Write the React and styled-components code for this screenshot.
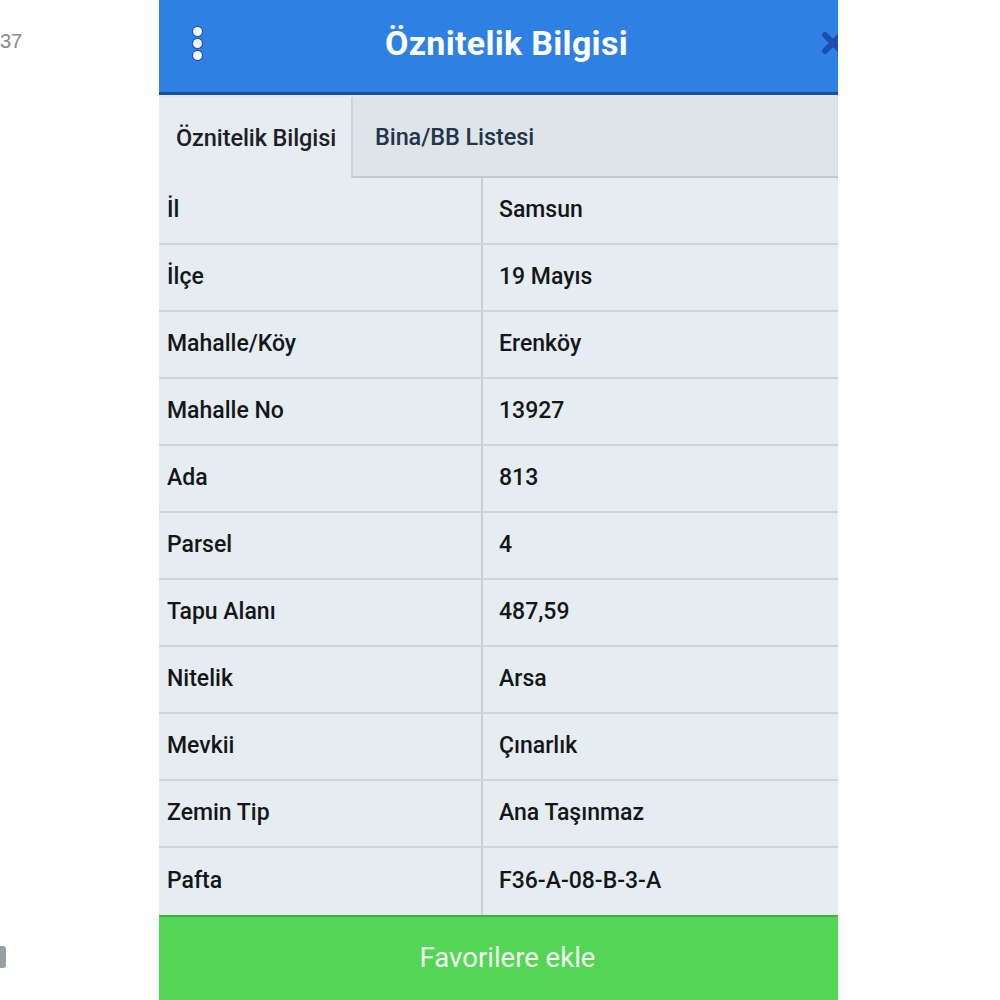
import React from "react";
import styled, { createGlobalStyle } from "styled-components";

const Global = createGlobalStyle`
  html, body { margin: 0; padding: 0; background: #ffffff; }
  body { font-family: Roboto, "Noto Sans", Arial, sans-serif; }
  * { box-sizing: border-box; }
`;

const Page = styled.div`
  width: 1000px;
  height: 1000px;
  display: grid;
  grid-template-columns: 159px 679px 1fr;
  overflow: hidden;
  background: #fff;
`;

const Side = styled.div`
  display: flex;
  flex-direction: column;
  justify-content: space-between;
  padding: 30px 0 32px;
  overflow: hidden;
`;

const SideNum = styled.span`
  font-family: "Liberation Sans", Arial, sans-serif;
  font-size: 20px;
  color: #8a8a8a;
`;

const SideMark = styled.span`
  display: block;
  width: 6px;
  height: 22px;
  background: #9a9fa4;
  border-radius: 0 3px 3px 0;
`;

const Phone = styled.div`
  display: flex;
  flex-direction: column;
  height: 1000px;
  background: #e5edf2;
`;

const Header = styled.header`
  height: 95px;
  flex: none;
  display: grid;
  grid-template-columns: 76px 1fr 60px;
  align-items: center;
  background: #2f80e3;
  border-bottom: 3px solid #1c4f96;
  box-shadow: 0 2px 0 #dfe6ec;
  padding-bottom: 6px;
  overflow: hidden;
`;

const Kebab = styled.div`
  display: flex;
  flex-direction: column;
  align-items: center;
  gap: 3px;
  justify-self: center;
  span {
    width: 9px;
    height: 9px;
    border-radius: 50%;
    background: #f2f6ff;
    box-shadow: 0 0 0 1px #1f4f9c;
  }
`;

const Title = styled.h1`
  margin: 0;
  text-align: center;
  color: #fff;
  font-size: 34px;
  font-weight: 700;
  letter-spacing: 0.3px;
`;

const Close = styled.div`
  justify-self: end;
  margin-right: -8px;
  width: 26px;
  height: 26px;
  display: flex;
  align-items: center;
  justify-content: center;
`;

const Tabs = styled.nav`
  height: 81px;
  flex: none;
  display: flex;
  background: #dfe4e8;
  border-bottom: 2px solid #c3c9ce;
  margin-top: 2px;
`;

const Tab = styled.div`
  display: flex;
  align-items: center;
  padding: ${(p) => (p.$active ? "0 0 0 17px" : "0 22px")};
  width: ${(p) => (p.$active ? "194px" : "auto")};
  font-size: 23.5px;
  font-weight: 500;
  letter-spacing: -0.1px;
  color: ${(p) => (p.$active ? "#1d2024" : "#23354d")};
  background: ${(p) => (p.$active ? "#e5edf1" : "transparent")};
  border-right: ${(p) => (p.$active ? "2px solid #cdd3d8" : "none")};
  margin-bottom: ${(p) => (p.$active ? "-2px" : "0")};
  white-space: nowrap;
`;

const Table = styled.div`
  flex: 1;
  display: flex;
  flex-direction: column;
`;

const Row = styled.div`
  height: 67px;
  flex: none;
  display: grid;
  grid-template-columns: 322px 1fr;
  border-bottom: 2px solid #cdd5da;
  &:last-child {
    border-bottom: none;
  }
`;

const Cell = styled.div`
  display: flex;
  align-items: center;
  padding-left: ${(p) => (p.$value ? "16px" : "8px")};
  padding-bottom: 2px;
  font-size: 23px;
  font-weight: 500;
  color: #141617;
  border-left: ${(p) => (p.$value ? "2px solid #c7cfd4" : "none")};
`;

const Button = styled.button`
  height: 88px;
  flex: none;
  border: none;
  border-top: 2px solid #3fae42;
  background: #53d655;
  color: #f4fbf2;
  font-family: Roboto, "Noto Sans", Arial, sans-serif;
  font-size: 27.5px;
  font-weight: 400;
  padding: 0 0 6px 18px;
  cursor: pointer;
`;

const rows = [
  ["İl", "Samsun"],
  ["İlçe", "19 Mayıs"],
  ["Mahalle/Köy", "Erenköy"],
  ["Mahalle No", "13927"],
  ["Ada", "813"],
  ["Parsel", "4"],
  ["Tapu Alanı", "487,59"],
  ["Nitelik", "Arsa"],
  ["Mevkii", "Çınarlık"],
  ["Zemin Tip", "Ana Taşınmaz"],
  ["Pafta", "F36-A-08-B-3-A"],
];

export default function App() {
  return (
    <>
      <Global />
      <Page>
        <Side>
          <SideNum>37</SideNum>
          <SideMark />
        </Side>
        <Phone>
          <Header>
            <Kebab>
              <span />
              <span />
              <span />
            </Kebab>
            <Title>Öznitelik Bilgisi</Title>
            <Close>
              <svg width="26" height="26" viewBox="0 0 26 26">
                <path d="M5 5 L21 21 M21 5 L5 21" stroke="#1b4fae" strokeWidth="6" strokeLinecap="round" />
              </svg>
            </Close>
          </Header>
          <Tabs>
            <Tab $active>Öznitelik Bilgisi</Tab>
            <Tab>Bina/BB Listesi</Tab>
          </Tabs>
          <Table>
            {rows.map(([k, v]) => (
              <Row key={k}>
                <Cell>{k}</Cell>
                <Cell $value>{v}</Cell>
              </Row>
            ))}
          </Table>
          <Button>Favorilere ekle</Button>
        </Phone>
        <div />
      </Page>
    </>
  );
}
